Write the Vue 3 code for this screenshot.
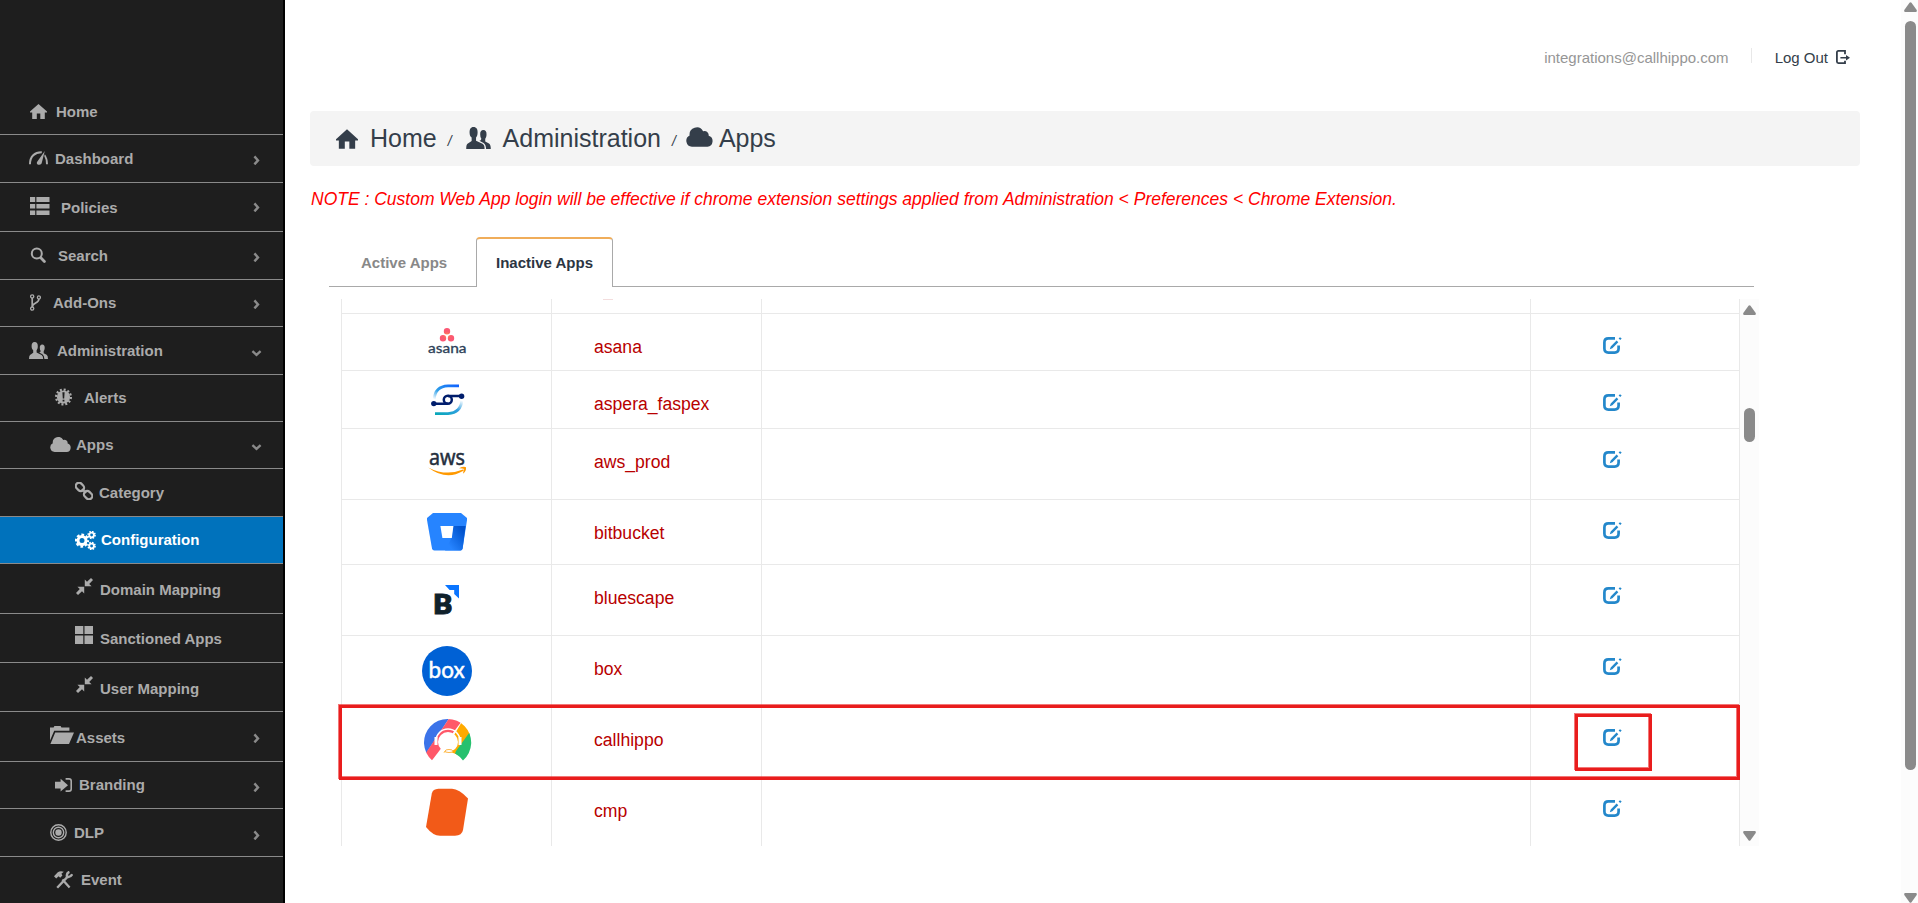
<script setup>
import { computed } from 'vue'

// row: full height incl. border, w/h: icon size, lift: icon bottom above the border,
// indent: icon left edge, gap: space between icon and label
const menu = [
  { label: 'Home', icon: 'home', row: 135, indent: 30, w: 17, h: 15, lift: 15, gap: 9, low: true },
  { label: 'Dashboard', icon: 'gauge', row: 48, indent: 29, w: 19, h: 14, lift: 17, gap: 7, arrow: 'right', arrowLift: 17 },
  { label: 'Policies', icon: 'list', row: 49, indent: 30, w: 20, h: 18, lift: 16, gap: 11, arrow: 'right', arrowLift: 19 },
  { label: 'Search', icon: 'search', row: 48, indent: 30, w: 16, h: 16, lift: 16, gap: 12, arrow: 'right', arrowLift: 17 },
  { label: 'Add-Ons', icon: 'fork', row: 47, indent: 30, w: 11, h: 17, lift: 15, gap: 12, arrow: 'right', arrowLift: 17 },
  { label: 'Administration', icon: 'users', row: 48, indent: 29, w: 19, h: 17, lift: 15, gap: 9, arrow: 'down', arrowLift: 17 },
  { label: 'Alerts', icon: 'alert', row: 47, indent: 55, w: 17, h: 18, lift: 15, gap: 12 },
  { label: 'Apps', icon: 'cloud', row: 47, indent: 50, w: 21, h: 15, lift: 16, gap: 5, arrow: 'down', arrowLift: 17 },
  { label: 'Category', icon: 'link', row: 48, indent: 75, w: 18, h: 18, lift: 16, gap: 6 },
  { label: 'Configuration', icon: 'cogs', row: 47, indent: 75, w: 21, h: 19, lift: 13, gap: 5, active: true },
  { label: 'Domain Mapping', icon: 'shrink', row: 50, indent: 76, w: 17, h: 17, lift: 18, gap: 7 },
  { label: 'Sanctioned Apps', icon: 'tiles', row: 49, indent: 75, w: 18, h: 18, lift: 18, gap: 7 },
  { label: 'User Mapping', icon: 'shrink', row: 49, indent: 76, w: 17, h: 17, lift: 18, gap: 7, low: true },
  { label: 'Assets', icon: 'folder', row: 50, indent: 50, w: 24, h: 18, lift: 17, gap: 2, arrow: 'right', arrowLift: 18 },
  { label: 'Branding', icon: 'signin', row: 47, indent: 55, w: 17, h: 14, lift: 16, gap: 7, arrow: 'right', arrowLift: 16 },
  { label: 'DLP', icon: 'target', row: 48, indent: 50, w: 17, h: 17, lift: 15, gap: 7, arrow: 'right', arrowLift: 16 },
  { label: 'Event', icon: 'tools', row: 47, indent: 54, w: 19, h: 18, lift: 14, gap: 8 },
]

const items = computed(() => menu.map((m) => ({
  ...m,
  rowStyle: { height: m.row + 'px', paddingLeft: m.indent + 'px' },
  iconStyle: { width: m.w + 'px', height: m.h + 'px', marginBottom: m.lift + 'px', marginRight: m.gap + 'px' },
  arrowStyle: { marginBottom: m.arrowLift + 'px' },
})))

const apps = [
  { name: 'asana', height: 57, tall: false },
  { name: 'aspera_faspex', height: 58, tall: false },
  { name: 'aws_prod', height: 71, tall: true },
  { name: 'bitbucket', height: 65, tall: true },
  { name: 'bluescape', height: 71, tall: true },
  { name: 'box', height: 71, tall: true },
  { name: 'callhippo', height: 71, tall: true },
  { name: 'cmp', height: 71, tall: true },
]
</script>

<template>
  <div class="page">
    <!-- icon sprite -->
    <svg class="sprite" width="0" height="0" aria-hidden="true">
      <symbol id="i-home" viewBox="0 0 17 15">
        <path fill="currentColor" d="M8.5 0 17 7.6V8.6H14.8V15H10.3V9.4H6.8V15H2.2V8.6H0V7.6Z" />
      </symbol>
      <symbol id="i-gauge" viewBox="0 0 19 14">
        <path fill="none" stroke="currentColor" stroke-width="2" d="M1 13.2C.9 5.5 5.8 1 12.8 1.2" />
        <path fill="currentColor" d="M15.8 0 12.6 12.4Q11 14.4 8.6 13.4 7.2 12.4 8.2 10.8ZM15.9 3.2Q18.9 7 19 13.2H17Q17 8 15.2 5Z" />
      </symbol>
      <symbol id="i-list" viewBox="0 0 20 18">
        <path fill="currentColor" d="M0 0H5.2V5H0ZM6.4 0H19.5V5H6.4ZM0 7H5.2V11.6H0ZM6.4 7H19.5V11.6H6.4ZM0 13.4H5.2V18H0ZM6.4 13.4H19.5V18H6.4Z" />
      </symbol>
      <symbol id="i-search" viewBox="0 0 16 16">
        <circle cx="6.8" cy="6.6" r="5" fill="none" stroke="currentColor" stroke-width="2" />
        <path stroke="currentColor" stroke-width="2.8" stroke-linecap="round" d="m10.8 10.8 3.6 3.6" />
      </symbol>
      <symbol id="i-fork" viewBox="0 0 11 17">
        <g fill="none" stroke="currentColor" stroke-width="1.3">
          <circle cx="2.2" cy="2.4" r="1.6" /><circle cx="2.2" cy="14.6" r="1.6" /><circle cx="8.9" cy="3.4" r="1.5" />
          <path stroke-width="1.7" d="M2.2 4V13M8.9 5C9 9.5 2.6 8.5 2.3 12.8" />
        </g>
      </symbol>
      <symbol id="i-users" viewBox="0 0 19 17">
        <path fill="currentColor" d="M5.6 0C8 0 8.9 1.8 8.8 4.2 8.8 6.4 8.2 7.4 7.6 8.2V10.6L12.6 13Q14.2 13.8 14.2 17H0Q0 13.8 1 13L4.2 10.8V8.2C3.2 7.4 2.6 6.2 2.6 4.2 2.6 1.8 3.4 0 5.6 0Z" />
        <path fill="currentColor" d="M13.2 2.4C15 2.4 15.8 3.8 15.7 5.8 15.7 7.4 15.2 8.4 14.7 9V11.2L17.6 12.8Q19 13.8 19 17H15.4Q15.2 13.4 13.4 12.3L10.2 10.6Q11.6 10.4 11.7 9 10.8 8 10.8 5.8C10.7 3.8 11.6 2.4 13.2 2.4Z" />
      </symbol>
      <symbol id="i-alert" viewBox="0 0 17 18">
        <circle cx="8.5" cy="9" r="6.6" fill="currentColor" />
        <circle cx="8.5" cy="9" r="7.4" fill="none" stroke="currentColor" stroke-width="2.2" stroke-dasharray="2 1.87" />
        <path fill="#1e1e1e" d="M7.4 4.2H9.6L9.2 10.4H7.8ZM7.6 11.8H9.4V13.6H7.6Z" />
      </symbol>
      <symbol id="i-cloud" viewBox="0 0 21 15">
        <path fill="currentColor" d="M4.6 15A4.6 4.6 0 0 1 2.8 6.3 5.6 5.6 0 0 1 13.3 3 3.2 3.2 0 0 1 17.6 6.6 4.3 4.3 0 0 1 16.7 15Z" />
      </symbol>
      <symbol id="i-link" viewBox="0 0 18 18">
        <g fill="none" stroke="currentColor" stroke-width="2.2">
          <rect x=".4" y="1.6" width="9" height="6.6" rx="3.2" transform="rotate(45 4.9 4.9)" />
          <rect x="8.6" y="9.8" width="9" height="6.6" rx="3.2" transform="rotate(45 13.1 13.1)" />
          <path d="m7 7 4 4" />
        </g>
      </symbol>
      <symbol id="i-cogs" viewBox="0 0 21 19">
        <g fill="none" stroke="currentColor">
          <circle cx="7" cy="9.6" r="4" stroke-width="3" />
          <circle cx="7" cy="9.6" r="5.9" stroke-width="2.4" stroke-dasharray="2.7 1.934" stroke-dashoffset="1.35" />
          <circle cx="16.6" cy="4" r="2.3" stroke-width="1.8" />
          <circle cx="16.6" cy="4" r="3.4" stroke-width="1.7" stroke-dasharray="1.5 1.17" />
          <circle cx="16.6" cy="15" r="2.3" stroke-width="1.8" />
          <circle cx="16.6" cy="15" r="3.4" stroke-width="1.7" stroke-dasharray="1.5 1.17" />
        </g>
      </symbol>
      <symbol id="i-shrink" viewBox="0 0 17 17">
        <path fill="currentColor" d="M8.8 1.4 11 3.8 15 0 17 2 13.2 6 15.6 8.2H8.8ZM8.2 15.6 6 13.2 2 17 0 15 3.8 11 1.4 8.8H8.2Z" />
      </symbol>
      <symbol id="i-tiles" viewBox="0 0 18 18">
        <path fill="currentColor" d="M0 0H8.3V8H0ZM9.5 0H18V8H9.5ZM0 9.4H8.3V18H0ZM9.5 9.4H18V18H9.5Z" />
      </symbol>
      <symbol id="i-folder" viewBox="0 0 24 18">
        <path fill="currentColor" d="M0 1.6H3.6L4.4 0H10.6L11.4 1.6H19.4V4.8H4.2L0 14.6ZM5.2 6.4H24L19 18H.4Z" />
      </symbol>
      <symbol id="i-signin" viewBox="0 0 17 14">
        <path fill="currentColor" d="M0 3.8H5.6V.8L13 7.2 5.6 13.6V10.4H0Z" />
        <path fill="none" stroke="currentColor" stroke-width="1.6" d="M10.6 .9H14Q16.2 .9 16.2 3V11Q16.2 13.1 14 13.1H10.6" />
      </symbol>
      <symbol id="i-target" viewBox="0 0 17 17">
        <g fill="none" stroke="currentColor" stroke-width="1.4">
          <circle cx="8.5" cy="8.5" r="7.7" /><circle cx="8.5" cy="8.5" r="5.2" />
        </g>
        <circle cx="8.5" cy="8.5" r="3.2" fill="currentColor" />
      </symbol>
      <symbol id="i-tools" viewBox="0 0 19 18">
        <path fill="currentColor" d="M0 5.2 3.8 1.2Q6.4-.4 9.8 .8L7.4 2.8 8.4 4.6 6.2 6.8 4.6 5.2 2.2 7.4Z" />
        <path fill="none" stroke="currentColor" stroke-width="2.3" d="m8.4 8.6 7.2 8M13 6.4 3.2 16.8" />
        <path fill="none" stroke="currentColor" stroke-width="2.4" d="M15.4 .8Q12.2 2 13 5.8 16.6 6.6 18.2 3.2" />
      </symbol>
      <symbol id="i-right" viewBox="0 0 11 10">
        <path fill="none" stroke="currentColor" stroke-width="2.4" d="m3.4 1.4 3.6 4-3.6 4" />
      </symbol>
      <symbol id="i-down" viewBox="0 0 11 10">
        <path fill="none" stroke="currentColor" stroke-width="2.4" d="m1.4 4.2 4.1 3.6 4.1-3.6" />
      </symbol>
      <symbol id="i-logout" viewBox="0 0 14 14">
        <path fill="none" stroke="currentColor" stroke-width="1.8" d="M9 4.2V.9H2.4Q.9 .9 .9 2.4V11.6Q.9 13.1 2.4 13.1H9V10.8" />
        <path fill="currentColor" d="M4.4 6.9H10V5L14 7.7 10 10.4V8.5H4.4Z" />
      </symbol>
      <symbol id="i-edit" viewBox="0 0 19 17">
        <path fill="none" stroke="currentColor" stroke-width="2.7" d="M12 1.4H5.4Q1.4 1.4 1.4 5.4V11.6Q1.4 15.6 5.4 15.6H11.6Q15.6 15.6 15.6 11.6V8.4" />
        <path fill="currentColor" d="M6.8 12.2 7.7 9.6 13.6 3.6 15.3 5.2 9.4 11.2ZM15.6 1.6 17 .2 18.7 1.4 17.2 3Z" />
      </symbol>
      <symbol id="i-arrow-up" viewBox="0 0 13 10">
        <path fill="#8a8a8a" d="M5.5 .7Q6.5-.3 7.5 .7L12.7 8Q13.2 10 11.8 10H1.2Q-.2 10 .3 8Z" />
      </symbol>
    </svg>

    <nav class="sidebar">
      <a v-for="(item, i) in items" :key="i" class="item" :class="{ active: item.active, low: item.low }" :style="item.rowStyle">
        <svg class="item-icon" :style="item.iconStyle"><use :href="'#i-' + item.icon" /></svg>
        <span class="item-label">{{ item.label }}</span>
        <svg v-if="item.arrow" class="item-arrow" :style="item.arrowStyle"><use :href="'#i-' + item.arrow" /></svg>
      </a>
    </nav>

    <main class="main">
      <header class="topbar">
        <span class="email">integrations@callhippo.com</span>
        <span class="divider"></span>
        <a class="logout">Log Out <svg class="logout-icon"><use href="#i-logout" /></svg></a>
      </header>

      <div class="breadcrumb">
        <svg class="bc-home"><use href="#i-home" /></svg>
        <span>Home</span>
        <i class="slash">/</i>
        <svg class="bc-users"><use href="#i-users" /></svg>
        <span>Administration</span>
        <i class="slash">/</i>
        <svg class="bc-cloud"><use href="#i-cloud" /></svg>
        <span>Apps</span>
      </div>

      <p class="note">NOTE : Custom Web App login will be effective if chrome extension settings applied from Administration &lt; Preferences &lt; Chrome Extension.</p>

      <div class="tabs">
        <a class="tab">Active Apps</a>
        <a class="tab selected">Inactive Apps</a>
      </div>

      <div class="table-wrap">
        <div class="table">
          <!-- tail of the row scrolled out above -->
          <div class="row tail">
            <div class="cell"></div>
            <div class="cell"><span class="descender"></span></div>
            <div class="cell"></div>
            <div class="cell"></div>
          </div>
          <div v-for="app in apps" :key="app.name" class="row line" :style="{ height: app.height + 'px' }">
            <div class="cell logo">
              <svg v-if="app.name === 'asana'" width="50" height="50" viewBox="0 0 50 50">
                <defs>
                  <radialGradient id="asana" cx=".5" cy=".55" r=".6"><stop offset="0" stop-color="#ff9250" /><stop offset=".45" stop-color="#fb5c6c" /><stop offset="1" stop-color="#fb5578" /></radialGradient>
                </defs>
                <path fill="url(#asana)" d="M25 4a3.2 3.2 0 1 1 0 6.4 3.2 3.2 0 0 1 0-6.4M21 11a3.2 3.2 0 1 1 0 6.4 3.2 3.2 0 0 1 0-6.4M29 11a3.2 3.2 0 1 1 0 6.4 3.2 3.2 0 0 1 0-6.4" />
                <text x="6" y="28.8" font-size="13.5" textLength="38.5" lengthAdjust="spacingAndGlyphs" fill="#2d3f58" stroke="#2d3f58" stroke-width=".3" class="lato">asana</text>
              </svg>
              <svg v-else-if="app.name === 'aspera_faspex'" width="50" height="50" viewBox="0 0 50 50">
                <defs>
                  <linearGradient id="asp-a" x1="1" y1="0" x2="0" y2="1"><stop offset="0" stop-color="#0f62fe" /><stop offset=".6" stop-color="#2fa0e8" /><stop offset="1" stop-color="#fff" /></linearGradient>
                  <linearGradient id="asp-b" x1="0" y1="1" x2="1" y2="0"><stop offset="0" stop-color="#08a8b8" /><stop offset=".55" stop-color="#2f9fe0" /><stop offset="1" stop-color="#fff" /></linearGradient>
                </defs>
                <path fill="none" stroke="url(#asp-a)" stroke-width="2.8" d="M37 4.9H26Q13 5.4 12.2 18.4" />
                <path fill="none" stroke="url(#asp-b)" stroke-width="2.8" d="M13 32.7H26Q39 31.6 39.8 19.4" />
                <g fill="none" stroke="#001d6c" stroke-width="2.5">
                  <circle cx="25.8" cy="18.8" r="4" />
                  <path d="M12 22.8H26M26 15H39" />
                </g>
                <circle cx="11.8" cy="22.6" r="2.7" fill="#001d6c" /><circle cx="39.6" cy="15.2" r="2.7" fill="#001d6c" />
              </svg>
              <svg v-else-if="app.name === 'aws_prod'" width="50" height="50" viewBox="0 0 50 50">
                <text x="7" y="25.6" font-size="22" textLength="36" lengthAdjust="spacingAndGlyphs" fill="#252f3e" stroke="#252f3e" stroke-width=".5" class="aws-word">aws</text>
                <path fill="#f90" d="M6.2 28.4Q24 37.6 41 30.6 42.6 30 41 32 24 42 6.2 28.4M37 29.2Q41.6 27 44 28.2 44.6 31.6 41.4 34.6 40.6 34.6 42.2 30 41 29.4 37 29.2" />
              </svg>
              <svg v-else-if="app.name === 'bitbucket'" width="50" height="50" viewBox="0 0 50 50">
                <defs>
                  <linearGradient id="bb" x1=".95" y1=".1" x2=".2" y2=".8"><stop offset=".1" stop-color="#0052cc" /><stop offset="1" stop-color="#2684ff" /></linearGradient>
                </defs>
                <path fill="#2684ff" d="M11 3H39L45 8V10L40.6 38.6Q40.2 40.6 38.4 40.6H12.4Q10.4 40.6 10 38.6L5 10V8Z" />
                <path fill="url(#bb)" d="M31.4 16H43.6L40.6 38.6Q40.2 40.6 38.4 40.6H23L29.6 28Z" />
                <path fill="#fff" d="M18.4 16H31.4L29.8 28H20.4Z" />
              </svg>
              <svg v-else-if="app.name === 'bluescape'" width="50" height="50" viewBox="0 0 50 50">
                <text x="11.4" y="39" font-size="28" textLength="19" lengthAdjust="spacingAndGlyphs" fill="#10212b" stroke="#10212b" stroke-width=".8" class="blue-word">B</text>
                <path fill="#0a75ff" d="M23 10H37V23.6L32.2 19V15H27.6Z" />
              </svg>
              <svg v-else-if="app.name === 'box'" width="50" height="50" viewBox="0 0 50 50">
                <circle cx="25" cy="25" r="25" fill="#0061d5" />
                <text x="6.6" y="32" font-size="23" textLength="36" lengthAdjust="spacingAndGlyphs" fill="#fff" stroke="#fff" stroke-width=".5" class="lato">box</text>
              </svg>
              <svg v-else-if="app.name === 'callhippo'" width="50" height="50" viewBox="0 0 50 50">
                <defs>
                  <clipPath id="hippo"><path d="M10.2 43.4A23.6 23.6 0 1 1 41 43.4Q34.4 35 25.6 35 17.4 35 10.2 43.4Z" /></clipPath>
                </defs>
                <g clip-path="url(#hippo)">
                  <path fill="#3b73e9" d="M0 0H28L3 38H0Z" />
                  <path fill="#ff5869" d="M28 0H43L8 46H0L4.5 35Z" />
                  <path fill="#fa0" d="M40.4 4 50 14 30 45H16Z" />
                  <path fill="#26c16e" d="M50 12 34 34 30 45H50Z" />
                </g>
                <path fill="none" stroke="#fff" stroke-width="1.6" d="M14 24A12 12 0 0 1 38 24" />
                <circle cx="26" cy="25" r="10" fill="#fff" />
                <path fill="none" stroke="#fff" stroke-width="3" d="M14 20V28M38 20V28" />
                <ellipse cx="27" cy="34" rx="3.8" ry="1.5" fill="#fff" stroke="#fdb64a" />
              </svg>
              <svg v-else width="50" height="50" viewBox="0 0 50 50">
                <path fill="#f25a18" d="M16.4 .8H30Q37 1 46 10.4L41 42Q40 47.6 33 47.8H18Q11 47.8 4 39L9.8 5.4Q10.8 1.2 16.4 .8Z" />
              </svg>
            </div>
            <div class="cell name">{{ app.name }}</div>
            <div class="cell"></div>
            <div class="cell action" :class="{ tall: app.tall }">
              <svg class="edit"><use href="#i-edit" /></svg>
            </div>
          </div>
        </div>

        <div class="scroll inner">
          <svg class="arrow"><use href="#i-arrow-up" /></svg>
          <div class="thumb"></div>
          <svg class="arrow flip"><use href="#i-arrow-up" /></svg>
        </div>

        <div class="callout row-callout"></div>
        <div class="callout edit-callout"></div>
      </div>
    </main>

    <div class="scroll outer">
      <svg class="arrow"><use href="#i-arrow-up" /></svg>
      <div class="thumb"></div>
      <svg class="arrow flip"><use href="#i-arrow-up" /></svg>
    </div>
  </div>
</template>

<style>
body {
  margin: 0;
  overflow: hidden;
  background: #fff;
}
</style>

<style scoped>
.page {
  display: flex;
  width: 1918px;
  height: 903px;
  overflow: hidden;
  font-family: "Liberation Sans", Arial, sans-serif;
  font-size: 15px;
  color: #343e4a;
}

.page * {
  box-sizing: border-box;
}

.sprite {
  position: absolute;
}

svg {
  display: block;
  flex: none;
}

/* Sidebar */
.sidebar {
  flex: none;
  width: 285px;
  height: 903px;
  overflow: hidden;
  background: #1e1e1e;
  border-right: 2px solid #000;
}

.item {
  display: flex;
  align-items: flex-end;
  border-bottom: 1px solid #8a8a8a;
  color: #ababab;
  font-weight: bold;
}

.item.active {
  background: #0072bc;
  color: #fff;
}

.item-label {
  line-height: 20px;
  margin-bottom: 13px;
  white-space: nowrap;
}

.low .item-label {
  margin-bottom: 12px;
}

.item-arrow {
  width: 11px;
  height: 10px;
  margin-left: auto;
  margin-right: 21px;
  color: #8a8a8a;
}

/* Main */
.main {
  flex: 1;
  min-width: 0;
  padding-left: 25px;
}

.topbar {
  display: flex;
  align-items: center;
  justify-content: flex-end;
  height: 111px;
  padding: 5px 51px 1px 0;
}

.email {
  color: #969696;
}

.divider {
  width: 1px;
  height: 15px;
  margin: -4px 23px 0 22px;
  background: #e8e8e8;
}

.logout {
  display: flex;
  align-items: center;
  gap: 8px;
}

.logout-icon {
  width: 14px;
  height: 14px;
  margin-top: -1px;
}

.breadcrumb {
  display: flex;
  align-items: center;
  width: 1550px;
  height: 55px;
  padding: 0 0 2px 26px;
  background: #f4f4f4;
  border-radius: 4px;
  font-size: 25px;
  line-height: 30px;
}

.bc-home {
  width: 22px;
  height: 20px;
  margin: 3px 12px 0 0;
}

.bc-users {
  width: 25px;
  height: 22px;
  margin: 1px 12px 0 14px;
}

.bc-cloud {
  width: 27px;
  height: 20px;
  margin: -1px 6px 0 10px;
}

.slash {
  margin: 7px 0 0 11px;
  font-size: 14px;
  line-height: 20px;
}

.note {
  margin: 20px 0 0 1px;
  font-size: 17.5px;
  font-style: italic;
  line-height: 26px;
  color: #f00;
  white-space: nowrap;
}

.tabs {
  display: flex;
  width: 1425px;
  height: 50px;
  margin: 25px 0 12px 19px;
  padding-left: 17px;
  border-bottom: 1px solid #a9a9a9;
  font-weight: bold;
}

.tab {
  width: 130px;
  height: 50px;
  padding: 17px 0 0 15px;
  line-height: 17px;
  color: #888;
}

.tab.selected {
  width: 137px;
  padding-left: 19px;
  padding-top: 15px;
  background: #fff;
  border: 1px solid #a9a9a9;
  border-top: 2px solid #f0ad5a;
  border-bottom: 0;
  border-radius: 4px 4px 0 0;
  color: #2c3542;
}

/* Table */
.table-wrap {
  position: relative;
  display: flex;
  height: 547px;
  margin-left: 31px;
}

.table {
  width: 1399px;
  overflow: hidden;
}

.row {
  display: grid;
  grid-template-columns: 210px 210px 769px 210px;
}

.row.tail {
  height: 14px;
}

.row.line {
  border-top: 1px solid #e9e9e9;
}

.cell {
  border-left: 1px solid #e9e9e9;
}

.cell:last-child {
  border-right: 1px solid #e9e9e9;
}

.descender {
  display: block;
  width: 10px;
  height: 1px;
  margin-left: 51px;
  background: #f3dddd;
}

.logo {
  padding: 10px 0 0 80px;
}

.name {
  padding: 21px 0 0 42px;
  font-size: 17.6px;
  line-height: 24px;
  color: #b80000;
}

.action {
  padding: 23px 0 0 72px;
}

.action.tall {
  padding-top: 22px;
}

.edit {
  width: 19px;
  height: 17px;
  color: #2488cb;
}

.lato {
  font-family: Lato, sans-serif;
}

.aws-word {
  font-family: "Noto Sans", sans-serif;
}

.blue-word {
  font-family: Roboto, sans-serif;
  font-weight: 900;
}

/* Scrollbars */
.scroll {
  display: flex;
  flex-direction: column;
  align-items: center;
  flex: none;
  background: #fcfcfc;
}

.scroll .arrow {
  width: 13px;
  height: 10px;
}

.scroll .flip {
  margin-top: auto;
  transform: rotate(180deg);
}

.thumb {
  width: 11px;
  background: #8a8a8a;
  border-radius: 6px;
}

.inner {
  width: 19px;
  padding: 6px 0 5px;
}

.inner .thumb {
  height: 34px;
  margin-top: 93px;
}

.outer {
  width: 17px;
  height: 903px;
  padding: 2px 0 0 2px;
}

.outer .thumb {
  height: 749px;
  margin-top: 9px;
}

/* Red markers over the table */
.callout {
  position: absolute;
  border: 3px solid #e91d1d;
  box-shadow: inset -1px -1px 0 rgba(233, 29, 29, 0.6), -1px -1px 0 rgba(233, 29, 29, 0.6);
}

.row-callout {
  left: -2px;
  top: 406px;
  width: 1401px;
  height: 75px;
}

.edit-callout {
  left: 1234px;
  top: 415px;
  width: 77px;
  height: 57px;
}
</style>
